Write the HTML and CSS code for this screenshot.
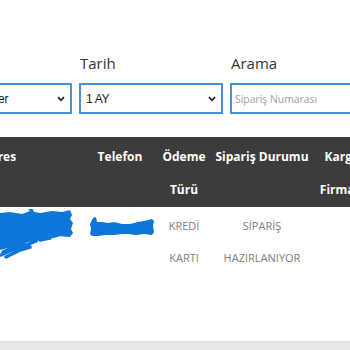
FILE: index.html
```html
<!DOCTYPE html>
<html lang="tr">
<head>
<meta charset="utf-8">
<title>Siparişler</title>
<link rel="stylesheet" href="styles.css">
</head>
<body>
<div class="page">
  <div class="filters">
    <div class="field">
      <label class="label">Durum</label>
      <div class="select"><span class="select-text">Tüm Siparişler</span>
        <svg class="chev" width="8" height="6" viewBox="0 0 8 6"><path d="M1 1.2 L4 4.3 L7 1.2" fill="none" stroke="#222" stroke-width="1.8"/></svg>
      </div>
    </div>
    <div class="field">
      <label class="label">Tarih</label>
      <div class="select"><span class="select-text">1 AY</span>
        <svg class="chev" width="8" height="6" viewBox="0 0 8 6"><path d="M1 1.2 L4 4.3 L7 1.2" fill="none" stroke="#222" stroke-width="1.8"/></svg>
      </div>
    </div>
    <div class="field">
      <label class="label">Arama</label>
      <div class="input"><span class="placeholder">Sipariş Numarası</span></div>
    </div>
  </div>

  <div class="table">
    <div class="row head">
      <div class="cell">Adres</div>
      <div class="cell">Telefon</div>
      <div class="cell">Ödeme Türü</div>
      <div class="cell">Sipariş Durumu</div>
      <div class="cell">Kargo Firması</div>
    </div>
    <div class="row body-row">
      <div class="cell scrib-cell">
        <svg class="scrib1" width="76" height="50" viewBox="0 0 76 50">
          <path fill="#0c77d8" d="M0 4 L10 3 L22 5 L30 2 L40 4 L52 2 L62 3 L70 1 L72 6 L70 10 L73 14 L71 20 L73 24 L70 28 L58 27 L50 30 L40 29 L38 32 L28 33 L22 36 L12 38 L4 40 L0 41 Z"/>
          <path fill="none" stroke="#0c77d8" stroke-width="3.5" stroke-linecap="round" d="M1 46 L14 40 L26 36 L36 32 M3 43 L18 36 M6 48 L20 41 L30 38 M40 31 L50 29 M30 -1 L32 3 M54 27 L58 26"/>
        </svg>
      </div>
      <div class="cell scrib-cell">
        <svg class="scrib2" width="68" height="24" viewBox="0 0 68 24">
          <path fill="#0c77d8" d="M2 8 L5 2 L8 1 L9 6 L14 6 L20 7 L26 6 L34 8 L42 8 L50 6 L56 5 L64 3 L66 5 L65 10 L66 16 L64 19 L56 18 L48 19 L40 18 L34 18 L26 19 L18 19 L10 20 L4 20 L2 18 L3 13 Z"/>
        </svg>
      </div>
      <div class="cell">KREDİ KARTI</div>
      <div class="cell">SİPARİŞ HAZIRLANIYOR</div>
      <div class="cell"></div>
    </div>
  </div>
</div>
</body>
</html>
```

FILE: styles.css
```css
* { box-sizing: border-box; }

html, body {
  margin: 0;
  padding: 0;
}

body {
  width: 350px;
  height: 350px;
  overflow: hidden;
  background: #e8e8ea;
  font-family: "Open Sans", "Noto Sans", sans-serif;
}

.page {
  width: 350px;
  height: 341px;
  background: #ffffff;
  overflow: hidden;
  padding-top: 53px;
  box-shadow: 0 1px 1px rgba(0, 0, 0, 0.04);
}

.filters {
  display: flex;
  gap: 7px;
  margin-left: -72px;
  width: 460px;
}

.field {
  width: 144px;
  flex: 0 0 auto;
  display: flex;
  flex-direction: column;
}

.label {
  font-size: 15px;
  line-height: 20px;
  color: #333333;
  margin-bottom: 10px;
  padding-left: 1px;
}

.select,
.input {
  height: 31px;
  border: 2px solid #4a90d9;
  display: flex;
  align-items: center;
  padding: 0 5px 0 5px;
  background: #fff;
}

.select {
  justify-content: space-between;
}

.select-text {
  font-family: "Liberation Sans", Arial, sans-serif;
  font-size: 12px;
  color: #222;
  letter-spacing: -0.3px;
}

.chev {
  display: block;
}

.placeholder {
  font-size: 10.4px;
  color: #a0a0a0;
  margin-left: -2px;
}

.table {
  margin-top: 23px;
  margin-left: -82px;
  width: 450px;
}

.row {
  display: grid;
  grid-template-columns: 162px 80px 48px 108px 52px;
}

.head {
  background: #3c3c3c;
  color: #ffffff;
  font-weight: 700;
  font-size: 12px;
  line-height: 33px;
  padding: 3px 0 1px;
  height: 70px;
}

.cell {
  text-align: center;
}

.body-row {
  font-size: 11px;
  line-height: 32px;
  color: #808080;
  padding-top: 3px;
}

.scrib-cell {
  text-align: left;
  line-height: 0;
}

.scrib1 {
  display: block;
  margin-left: 82px;
  margin-top: -1px;
}

.scrib2 {
  display: block;
  margin-left: 8px;
  margin-top: 6px;
}
```
